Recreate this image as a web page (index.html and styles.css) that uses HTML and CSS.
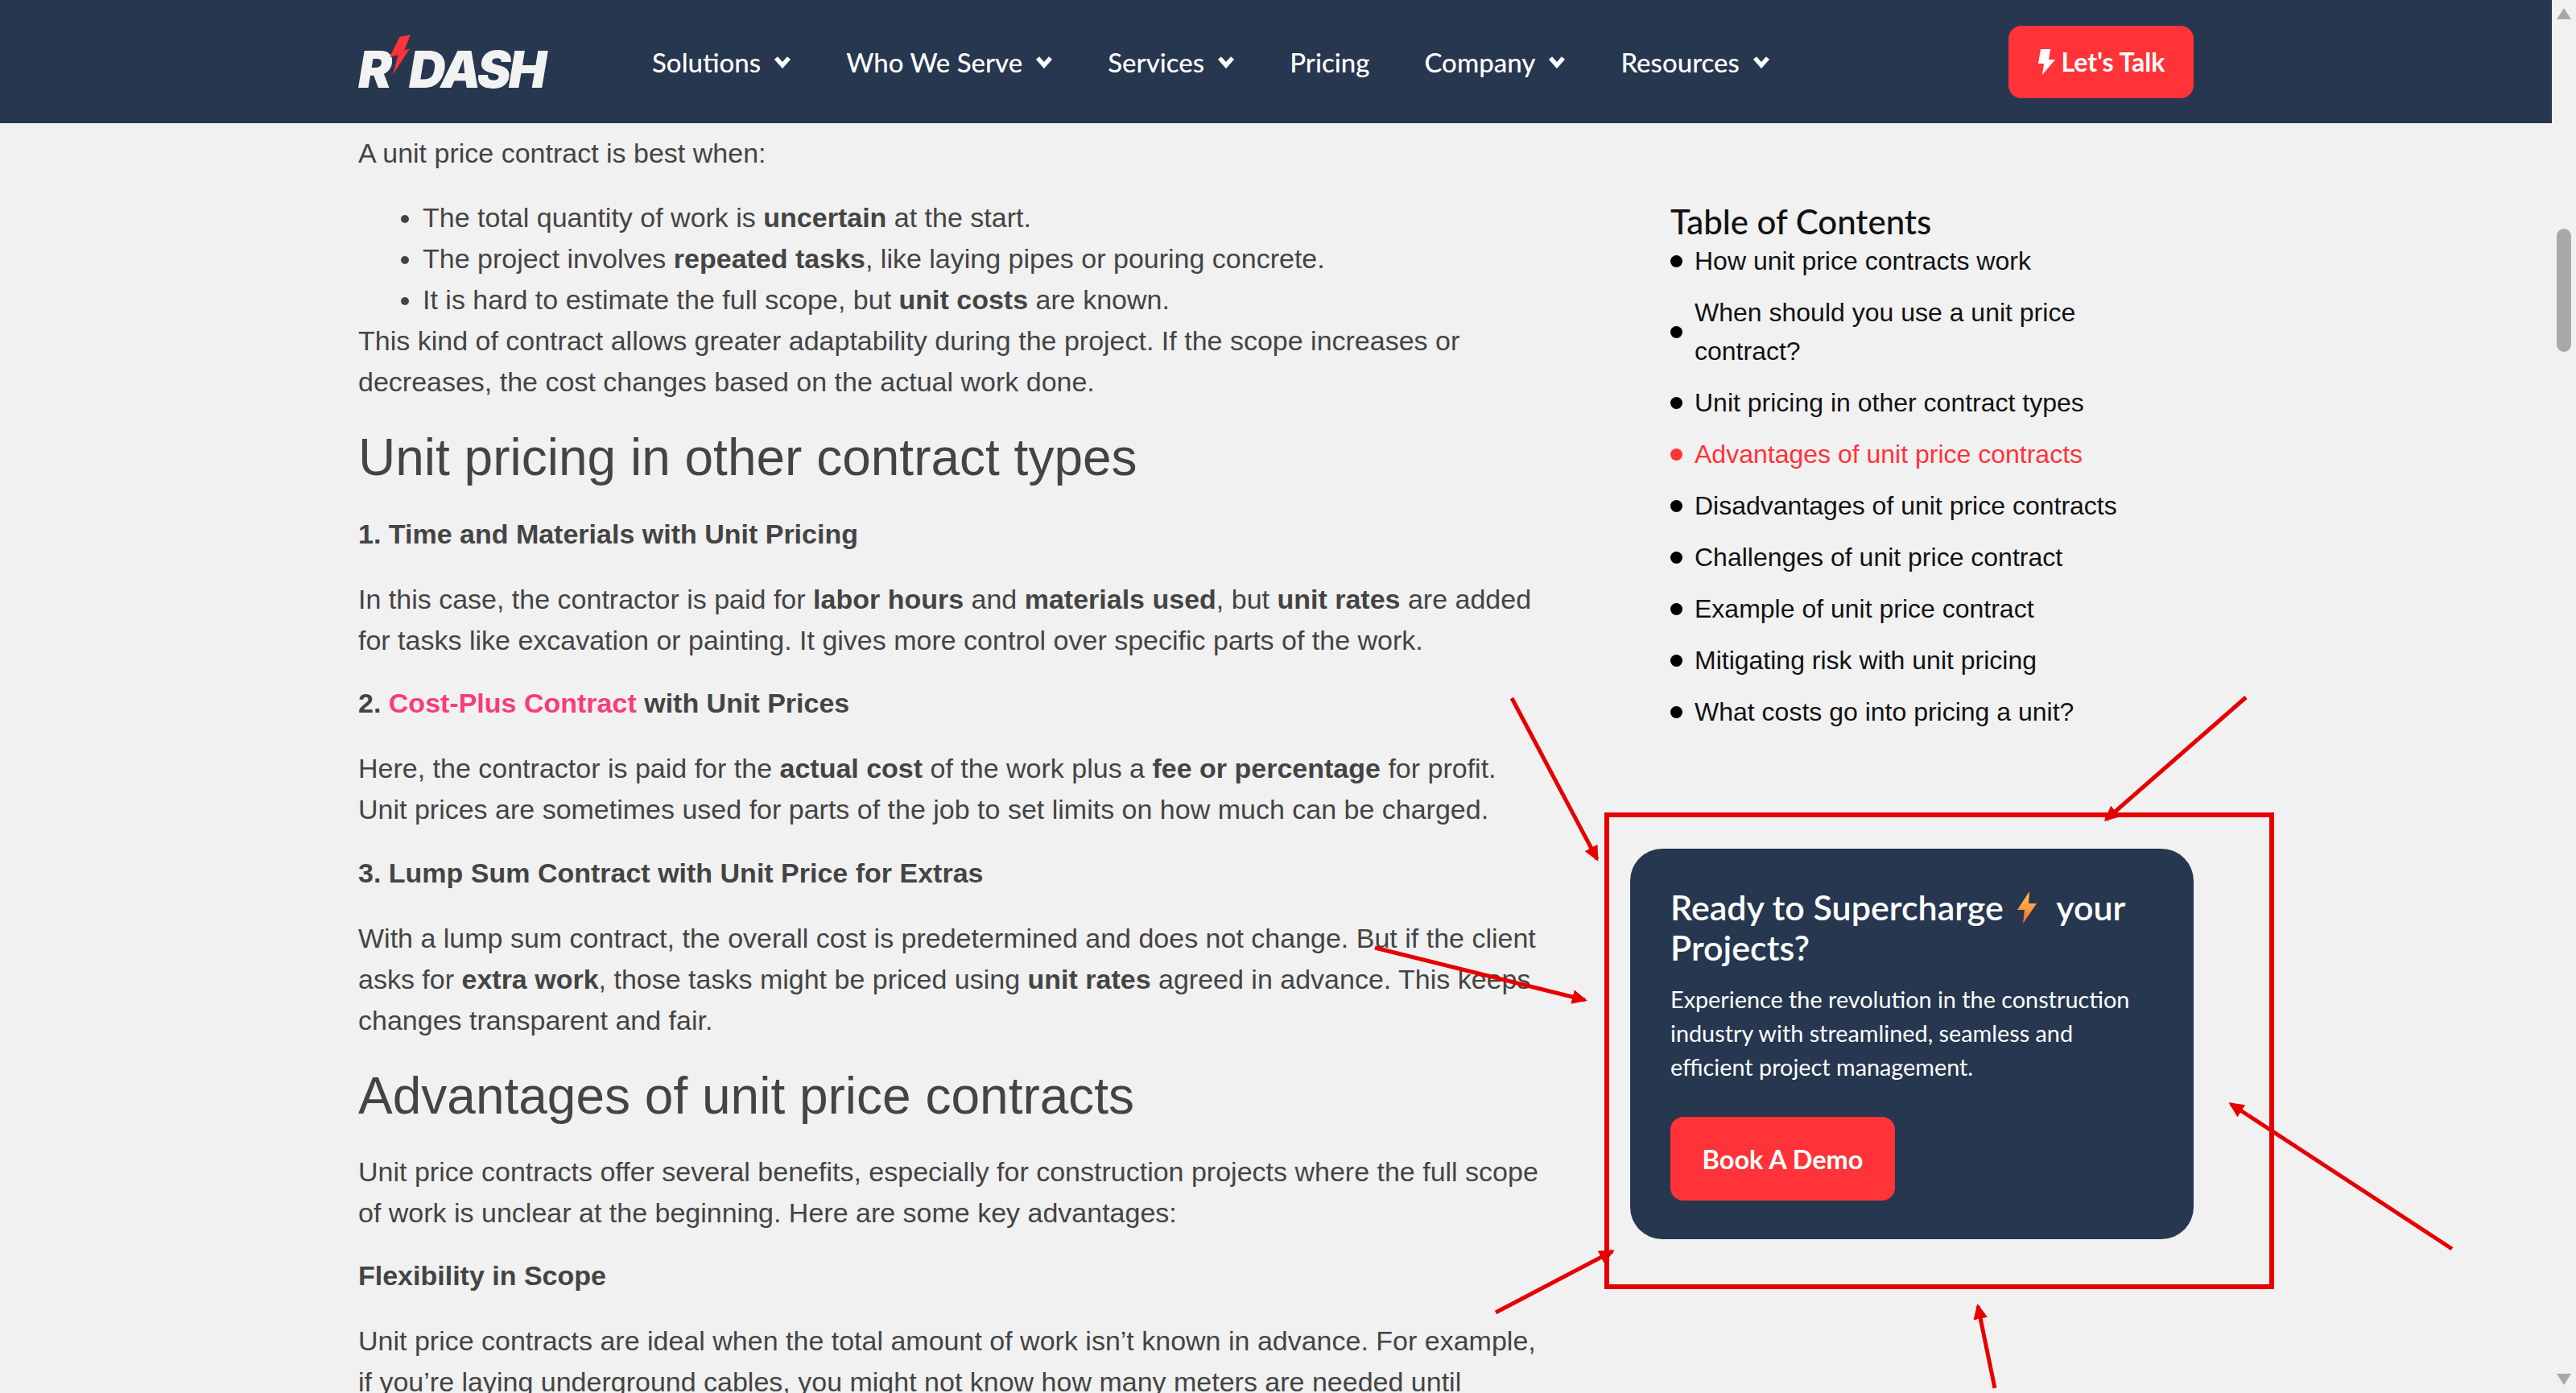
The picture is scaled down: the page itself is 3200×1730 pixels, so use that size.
FILE: index.html
```html
<!DOCTYPE html>
<html lang="en">
<head>
    <meta charset="UTF-8">
    <meta name="viewport" content="width=device-width, initial-scale=1.0">
    <title>Unit price contract</title>
    <link rel="stylesheet" href="styles.css">
</head>
<body>
    <div class="page">
        <!-- Top Navigation -->
        <header class="site-header">
            <a class="logo" href="#">
                <span class="logo-r">R</span>
                <svg class="logo-bolt" viewBox="0 0 28 52"><path d="M13 3 L27 0 L19 20 L26 18 L4 52 L11 26 L0 29 Z"/></svg>
                <span class="logo-dash">DASH</span>
            </a>
            <nav class="main-nav">
                <a href="#">Solutions <svg class="chevron" viewBox="0 0 22 16"><path d="M3 3 L11 12 L19 3"/></svg></a>
                <a href="#">Who We Serve <svg class="chevron" viewBox="0 0 22 16"><path d="M3 3 L11 12 L19 3"/></svg></a>
                <a href="#">Services <svg class="chevron" viewBox="0 0 22 16"><path d="M3 3 L11 12 L19 3"/></svg></a>
                <a href="#">Pricing</a>
                <a href="#">Company <svg class="chevron" viewBox="0 0 22 16"><path d="M3 3 L11 12 L19 3"/></svg></a>
                <a href="#">Resources <svg class="chevron" viewBox="0 0 22 16"><path d="M3 3 L11 12 L19 3"/></svg></a>
            </nav>
            <a class="talk-btn" href="#">
                <svg class="talk-bolt" viewBox="0 0 22 32"><path d="M4 0 H16 L14 13 H22 L6 32 L8 18 H1 Z"/></svg>
                Let's Talk
            </a>
        </header>

        <div class="content">
            <!-- Article -->
            <main class="article">
                <p class="lead">A unit price contract is best when:</p>
                <ul>
                    <li>The total quantity of work is <strong>uncertain</strong> at the start.</li>
                    <li>The project involves <strong>repeated tasks</strong>, like laying pipes or pouring concrete.</li>
                    <li>It is hard to estimate the full scope, but <strong>unit costs</strong> are known.</li>
                </ul>
                <p>This kind of contract allows greater adaptability during the project. If the scope increases or decreases, the cost changes based on the actual work done.</p>

                <h2>Unit pricing in other contract types</h2>
                <h3>1. Time and Materials with Unit Pricing</h3>
                <p>In this case, the contractor is paid for <strong>labor hours</strong> and <strong>materials used</strong>, but <strong>unit rates</strong> are added for tasks like excavation or painting. It gives more control over specific parts of the work.</p>
                <h3>2. <a href="#">Cost-Plus Contract</a> with Unit Prices</h3>
                <p>Here, the contractor is paid for the <strong>actual cost</strong> of the work plus a <strong>fee or percentage</strong> for profit. Unit prices are sometimes used for parts of the job to set limits on how much can be charged.</p>
                <h3>3. Lump Sum Contract with Unit Price for Extras</h3>
                <p>With a lump sum contract, the overall cost is predetermined and does not change. But if the client asks for <strong>extra work</strong>, those tasks might be priced using <strong>unit rates</strong> agreed in advance. This keeps changes transparent and fair.</p>

                <h2>Advantages of unit price contracts</h2>
                <p>Unit price contracts offer several benefits, especially for construction projects where the full scope of work is unclear at the beginning. Here are some key advantages:</p>
                <h3>Flexibility in Scope</h3>
                <p>Unit price contracts are ideal when the total amount of work isn’t known in advance. For example, if you’re laying underground cables, you might not know how many meters are needed until</p>
            </main>

            <!-- Sidebar -->
            <aside class="sidebar">
                <div class="toc">
                    <h4>Table of Contents</h4>
                    <ul class="toc-list">
                        <li>How unit price contracts work</li>
                        <li>When should you use a unit price contract?</li>
                        <li>Unit pricing in other contract types</li>
                        <li class="active">Advantages of unit price contracts</li>
                        <li>Disadvantages of unit price contracts</li>
                        <li>Challenges of unit price contract</li>
                        <li>Example of unit price contract</li>
                        <li>Mitigating risk with unit pricing</li>
                        <li>What costs go into pricing a unit?</li>
                    </ul>
                </div>
                <div class="demo-card">
                    <h3 class="demo-title">Ready to Supercharge
                        <svg class="demo-bolt" viewBox="0 0 24 40">
                            <defs>
                                <linearGradient id="boltFill" x1="0" y1="0" x2="0" y2="1">
                                    <stop offset="0" stop-color="#ffc44d"/>
                                    <stop offset="0.55" stop-color="#ff9a3d"/>
                                    <stop offset="1" stop-color="#ff5a3c"/>
                                </linearGradient>
                            </defs>
                            <path fill="url(#boltFill)" d="M15 0 L0 23 H9 L7 40 L24 15 H14 Z"/>
                        </svg>
                        your Projects?</h3>
                    <p>Experience the revolution in the construction industry with streamlined, seamless and efficient project management.</p>
                    <a class="demo-btn" href="#">Book A Demo</a>
                </div>
            </aside>
        </div>
    </div>

    <!-- Browser scrollbar -->
    <div class="scrollbar">
        <svg class="scroll-arrow" viewBox="0 0 18 14"><path d="M9 0 L18 14 H0 Z"/></svg>
        <div class="scroll-thumb"></div>
        <svg class="scroll-arrow scroll-arrow-down" viewBox="0 0 18 14"><path d="M0 0 H18 L9 14 Z"/></svg>
    </div>

    <!-- Red annotations drawn over the screenshot -->
    <svg class="annotations" viewBox="0 0 3200 1730">
        <defs>
            <marker id="arrowHead" markerWidth="5" markerHeight="5" refX="3.2" refY="1.8" orient="auto">
                <path d="M0 0 L3.8 1.8 L0 3.6 Z" fill="#e60000"/>
            </marker>
        </defs>
        <rect class="mark-box" x="1996" y="1012" width="826" height="586"/>
        <line class="mark-arrow" x1="1878" y1="867" x2="1984" y2="1067"/>
        <line class="mark-arrow" x1="2790" y1="866" x2="2616" y2="1018"/>
        <line class="mark-arrow" x1="1708" y1="1177" x2="1969" y2="1242"/>
        <line class="mark-arrow" x1="3046" y1="1551" x2="2771" y2="1371"/>
        <line class="mark-arrow" x1="1858" y1="1630" x2="2003" y2="1554"/>
        <line class="mark-arrow" x1="2478" y1="1724" x2="2457" y2="1622"/>
    </svg>
</body>
</html>
```

FILE: styles.css
```css
/* General Reset */
* {
    box-sizing: border-box;
    margin: 0;
    padding: 0;
}
body {
    display: flex;
    height: 100vh;
    overflow: hidden;
    background: #f1f1f1;
    font-family: "Liberation Sans", Arial, sans-serif;
    color: #444;
}
a {
    text-decoration: none;
}
.page {
    width: 3170px;
    flex-shrink: 0;
}

/* Header */
.site-header {
    display: flex;
    align-items: center;
    height: 153px;
    padding: 0 445px;
    background: #26374f;
    font-family: Lato, sans-serif;
}
.logo {
    display: flex;
    align-items: flex-end;
    width: 234px;
    height: 70px;
    margin-right: 131px;
    color: #f2f2f2;
    font-family: Inter, sans-serif;
    font-size: 63px;
    font-weight: 900;
    font-style: italic;
    line-height: 52px;
    letter-spacing: -3px;
}
.logo-bolt {
    width: 27px;
    height: 52px;
    margin: 0 -3px 18px 0;
    fill: #ff3338;
    flex-shrink: 0;
}
.main-nav {
    display: flex;
    align-items: center;
    gap: 68px;
}
.main-nav a {
    display: flex;
    align-items: center;
    gap: 16px;
    color: #fff;
    font-size: 33px;
    font-weight: 500;
}
.chevron {
    width: 22px;
    height: 16px;
    fill: none;
    stroke: #fff;
    stroke-width: 5.5;
}
.talk-btn {
    display: flex;
    align-items: center;
    justify-content: center;
    gap: 8px;
    width: 230px;
    height: 90px;
    margin-left: auto;
    background: #ff3338;
    border-radius: 16px;
    color: #fff;
    font-size: 32px;
    font-weight: 700;
}
.talk-bolt {
    width: 22px;
    height: 32px;
    fill: #fff;
}

/* Article and sidebar columns */
.content {
    display: flex;
    justify-content: space-between;
    padding: 12px 445px 0;
}
.article {
    width: 1480px;
    flex-shrink: 0;
    font-size: 34px;
    line-height: 51px;
}
.article p {
    margin-bottom: 26px;
}
.article .lead {
    margin-bottom: 29px;
}
.article ul {
    padding-left: 80px;
}
.article h2 {
    margin-bottom: 27px;
    font-size: 64px;
    font-weight: 400;
    line-height: 84px;
}
.article h3 {
    margin-top: 27.5px;
    margin-bottom: 30px;
    font-size: 34px;
    font-weight: 700;
    line-height: 51px;
}
.article h3 a {
    color: #f73d78;
}

/* Table of Contents */
.sidebar {
    width: 700px;
    flex-shrink: 0;
}
.toc {
    padding: 85px 50px 0;
    color: #111;
}
.toc h4 {
    font-family: Lato, sans-serif;
    font-size: 42px;
    font-weight: 500;
    line-height: 50px;
}
.toc-list {
    display: flex;
    flex-direction: column;
    gap: 16px;
    margin-bottom: 146px;
    list-style: none;
    font-size: 32px;
    line-height: 48px;
}
.toc-list li {
    display: flex;
    align-items: center;
    gap: 15px;
}
.toc-list li::before {
    content: "";
    width: 15px;
    height: 15px;
    border-radius: 50%;
    background: #000;
    flex-shrink: 0;
}
.toc-list li.active {
    color: #ff3338;
}
.toc-list li.active::before {
    background: #ff3338;
}

/* Book a demo card */
.demo-card {
    height: 485px;
    padding: 48px 50px 50px;
    background: #26374f;
    border-radius: 40px;
    color: #fff;
    font-family: Lato, sans-serif;
}
.demo-title {
    margin-bottom: 18px;
    font-size: 43px;
    font-weight: 600;
    line-height: 50px;
}
.demo-bolt {
    width: 24px;
    height: 40px;
    margin: 0 15px 0 6px;
    vertical-align: -4px;
}
.demo-card p {
    margin-bottom: 41px;
    font-size: 28.8px;
    line-height: 42px;
}
.demo-btn {
    display: inline-flex;
    align-items: center;
    justify-content: center;
    width: 279px;
    height: 104px;
    background: #ff3338;
    border-radius: 16px;
    color: #fff;
    font-size: 32.5px;
    font-weight: 700;
}

/* Scrollbar */
.scrollbar {
    display: flex;
    flex-direction: column;
    align-items: center;
    width: 30px;
    height: 100%;
    padding: 10px 0;
}
.scroll-arrow {
    width: 18px;
    height: 14px;
    fill: #a8a8a8;
}
.scroll-arrow-down {
    margin-top: auto;
}
.scroll-thumb {
    width: 18px;
    height: 153px;
    margin-top: 260px;
    border-radius: 9px;
    background: #a8a8a8;
}

/* Annotations */
.annotations {
    position: absolute;
    top: 0;
    left: 0;
    width: 3200px;
    height: 1730px;
    pointer-events: none;
}
.mark-box {
    fill: none;
    stroke: #e60000;
    stroke-width: 6;
}
.mark-arrow {
    stroke: #e60000;
    stroke-width: 5;
    marker-end: url(#arrowHead);
}
```
